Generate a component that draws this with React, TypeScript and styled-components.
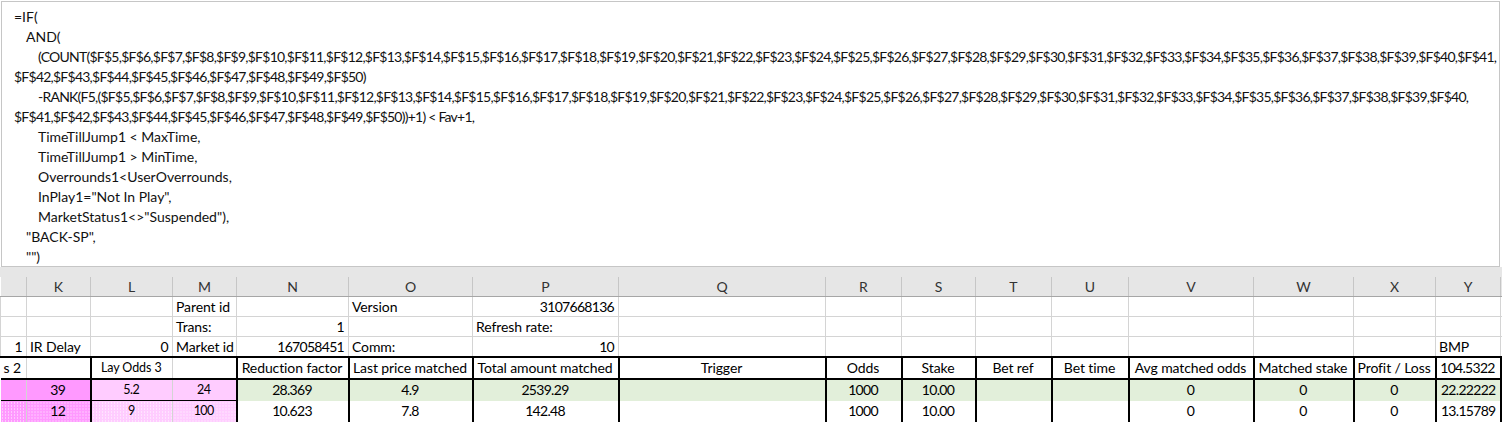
import React from "react";
import styled, { createGlobalStyle } from "styled-components";

const Global = createGlobalStyle`
  html, body { margin: 0; padding: 0; background: #ffffff; }
  body { font-family: Lato, "Liberation Sans", sans-serif; color: #000; }
`;

const Page = styled.div`
  width: 1502px;
  height: 422px;
  overflow: hidden;
  background: #e6e6e6;
  display: flex;
  flex-direction: column;
`;

const FormulaFrame = styled.div`
  background: #ffffff;
  padding: 1px 2px 0 1px;
`;

const FormulaBox = styled.div`
  height: 266px;
  box-sizing: border-box;
  border: 1px solid #c6c6c6;
  background: #ffffff;
  padding: 5px 0 0 0;
  font-size: 14px;
  line-height: 20px;
  overflow: hidden;
  color: #111;
`;

const FLine = styled.div<{ $indent: number; $tight?: boolean }>`
  white-space: nowrap;
  padding-left: ${(p) => 12 + p.$indent * 12}px;
  letter-spacing: ${(p) => (p.$tight ? "-0.76px" : "0")};
`;

const Strip = styled.div`
  height: 10px;
  background: #e6e6e6;
`;

const Sheet = styled.table`
  border-collapse: collapse;
  table-layout: fixed;
  width: 1502px;
  font-size: 14px;
  background: #ffffff;
`;

const HeadCell = styled.th`
  height: 19px;
  padding: 0;
  font-weight: normal;
  color: #333;
  background: #e6e6e6;
  border-left: 1px solid #c6c6c6;
  border-bottom: 1px solid #a6a6a6;
  text-align: center;
  font-size: 14px;
  &:first-child { border-left: none; }
`;

type Align = "l" | "c" | "r";

const Cell = styled.td<{
  $align?: Align;
  $bg?: string;
  $small?: boolean;
  $num?: boolean;
  $h: number;
}>`
  height: ${(p) => p.$h}px;
  padding: 0 4px 0 3px;
  white-space: nowrap;
  overflow: hidden;
  text-align: ${(p) => (p.$align === "r" ? "right" : p.$align === "c" ? "center" : "left")};
  font-size: ${(p) => (p.$small ? "12.5px" : "14px")};
  letter-spacing: ${(p) => (p.$num ? (p.$small ? "-0.5px" : "-0.7px") : "-0.1px")};
  background: ${(p) => p.$bg ?? "#ffffff"};
  border: 1px solid #d4d4d4;
  line-height: 18px;
  vertical-align: middle;
`;

const cols = [26, 64, 82, 64, 112, 124, 146, 207, 76, 74, 76, 77, 125, 100, 82, 65, 2];
const letters = ["", "K", "L", "M", "N", "O", "P", "Q", "R", "S", "T", "U", "V", "W", "X", "Y", ""];

const PINK = "#ff99ff";
const PINK_L = "#ffccff";
const dotted = (c: string) =>
  `radial-gradient(circle, rgba(255,255,255,0.9) 0.7px, transparent 0.9px) 0 0 / 3px 3px, ${c}`;
const GREEN = "#e2efda";

type C = { t?: string; a?: Align; bg?: string; sm?: boolean; b?: React.CSSProperties };

const TH = "2px solid #000";
const TN = "1px solid #000";

const topRows: C[][] = [
  [{}, {}, {}, { t: "Parent id" }, {}, { t: "Version" }, { t: "3107668136", a: "r" }, {}, {}, {}, {}, {}, {}, {}, {}, {}, {}],
  [{}, {}, {}, { t: "Trans:" }, { t: "1", a: "r" }, {}, { t: "Refresh rate:" }, {}, {}, {}, {}, {}, {}, {}, {}, {}, {}],
  [{ t: "1", a: "r" }, { t: "IR Delay" }, { t: "0", a: "r" }, { t: "Market id" }, { t: "167058451", a: "r" }, { t: "Comm:" }, { t: "10", a: "r" }, {}, {}, {}, {}, {}, {}, {}, {}, { t: "BMP" }, {}],
];

const headerTexts = ["s 2", "", "Lay Odds 3", "", "Reduction factor", "Last price matched", "Total amount matched", "Trigger", "Odds", "Stake", "Bet ref", "Bet time", "Avg matched odds", "Matched stake", "Profit / Loss", "104.5322"];

const data1 = ["", "39", "5.2", "24", "28.369", "4.9", "2539.29", "", "1000", "10.00", "", "", "0", "0", "0", "22.22222"];
const data2 = ["", "12", "9", "100", "10.623", "7.8", "142.48", "", "1000", "10.00", "", "", "0", "0", "0", "13.15789"];

const thickLeft = new Set([2, 4, 5, 6, 7, 8, 9, 10, 11, 12, 13, 14, 15, 16]);

const isNum = (t?: string) => !!t && /^[0-9.]+$/.test(t);

function tableRow(kind: "head" | "d1" | "d2"): C[] {
  const texts = kind === "head" ? headerTexts : kind === "d1" ? data1 : data2;
  return cols.map((_, i) => {
    if (i === 16) {
      return { b: { borderLeft: TH, borderTop: "1px solid #d4d4d4", borderBottom: "1px solid #d4d4d4" } };
    }
    const t = texts[i];
    const c: C = { t, a: "c" };
    if (kind === "head" && i === 0) c.a = "l";
    if (i === 15) c.a = kind === "head" ? "c" : "r";
    if (i === 2 || (i === 3 && kind !== "head")) c.sm = true;
    const b: React.CSSProperties = {};
    b.borderLeft = thickLeft.has(i) ? TH : kind === "head" ? "1px solid #d4d4d4" : TN;
    if (i === 0) b.borderLeft = "none";
    if (kind === "head") {
      b.borderTop = TH;
      b.borderBottom = TH;
    } else if (kind === "d1") {
      b.borderTop = TH;
      b.borderBottom = i <= 3 ? TN : "none";
    } else {
      b.borderTop = i <= 3 ? TN : "none";
      b.borderBottom = "none";
    }
    if (kind === "d1") {
      c.bg = i <= 1 ? PINK : i <= 3 ? PINK_L : GREEN;
    } else if (kind === "d2") {
      c.bg = i <= 1 ? dotted(PINK) : i <= 3 ? dotted(PINK_L) : "#ffffff";
    }
    c.b = b;
    return c;
  });
}

const formula: [number, string, boolean?][] = [
  [0, "=IF("],
  [1, "AND("],
  [2, "(COUNT($F$5,$F$6,$F$7,$F$8,$F$9,$F$10,$F$11,$F$12,$F$13,$F$14,$F$15,$F$16,$F$17,$F$18,$F$19,$F$20,$F$21,$F$22,$F$23,$F$24,$F$25,$F$26,$F$27,$F$28,$F$29,$F$30,$F$31,$F$32,$F$33,$F$34,$F$35,$F$36,$F$37,$F$38,$F$39,$F$40,$F$41,", true],
  [0, "$F$42,$F$43,$F$44,$F$45,$F$46,$F$47,$F$48,$F$49,$F$50)", true],
  [2, "-RANK(F5,($F$5,$F$6,$F$7,$F$8,$F$9,$F$10,$F$11,$F$12,$F$13,$F$14,$F$15,$F$16,$F$17,$F$18,$F$19,$F$20,$F$21,$F$22,$F$23,$F$24,$F$25,$F$26,$F$27,$F$28,$F$29,$F$30,$F$31,$F$32,$F$33,$F$34,$F$35,$F$36,$F$37,$F$38,$F$39,$F$40,", true],
  [0, "$F$41,$F$42,$F$43,$F$44,$F$45,$F$46,$F$47,$F$48,$F$49,$F$50))+1) < Fav+1,", true],
  [2, "TimeTillJump1 < MaxTime,"],
  [2, "TimeTillJump1 > MinTime,"],
  [2, "Overrounds1<UserOverrounds,"],
  [2, 'InPlay1="Not In Play",'],
  [2, 'MarketStatus1<>"Suspended"),'],
  [1, '"BACK-SP",'],
  [1, '"")'],
];

function renderRow(cells: C[], h: number, key: string) {
  return (
    <tr key={key}>
      {cells.map((c, i) => (
        <Cell key={i} $align={c.a} $bg={c.bg} $small={c.sm} $num={isNum(c.t)} $h={h} style={c.b}>
          {c.t}
        </Cell>
      ))}
    </tr>
  );
}

export default function App() {
  return (
    <Page>
      <Global />
      <FormulaFrame>
        <FormulaBox>
          {formula.map(([ind, txt, tight], i) => (
            <FLine key={i} $indent={ind} $tight={tight}>
              {txt}
            </FLine>
          ))}
        </FormulaBox>
      </FormulaFrame>
      <Strip />
      <Sheet>
        <colgroup>
          {cols.map((w, i) => (
            <col key={i} style={{ width: w }} />
          ))}
        </colgroup>
        <thead>
          <tr>
            {letters.map((l, i) => (
              <HeadCell key={i}>{l}</HeadCell>
            ))}
          </tr>
        </thead>
        <tbody>
          {topRows.map((r, i) => renderRow(r, 19, "t" + i))}
          {renderRow(tableRow("head"), 20, "h")}
          {renderRow(tableRow("d1"), 20, "d1")}
          {renderRow(tableRow("d2"), 20, "d2")}
        </tbody>
      </Sheet>
    </Page>
  );
}
